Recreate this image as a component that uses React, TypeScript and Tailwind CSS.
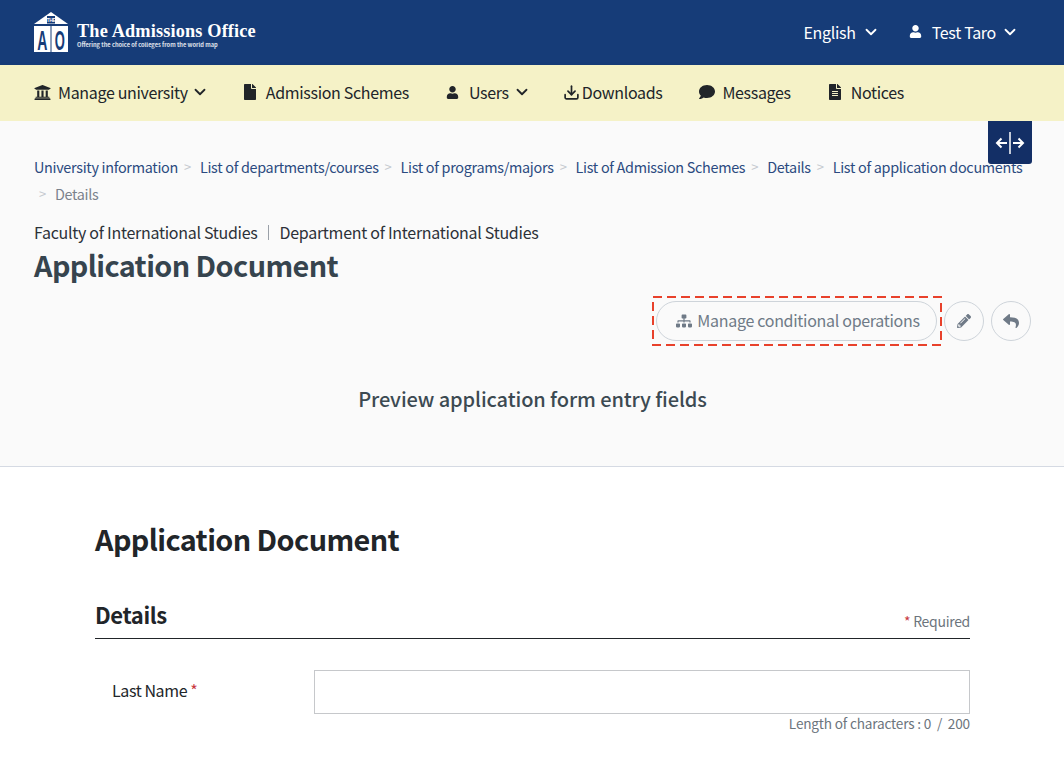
import { ChevronDown, Download } from "lucide-react";
import { FaComment, FaFile, FaFileAlt, FaPencilAlt, FaReply, FaSitemap, FaUniversity, FaUser } from "react-icons/fa";

const crumbs = [
  "University information",
  "List of departments/courses",
  "List of programs/majors",
  "List of Admission Schemes",
  "Details",
  "List of application documents",
];

function Logo() {
  return (
    <div className="flex items-start gap-[9px] mt-[-2px]">
      <svg width="34" height="46" viewBox="0 0 34 46" className="shrink-0 mb-[-6px]">
        <path d="M17 0 L34 12 H0 Z" fill="#fff" />
        <rect x="13" y="4" width="8" height="7.5" fill="#163c78" />
        <text x="17" y="10" textAnchor="middle" fontSize="5" fontWeight="700" fill="#fff" fontFamily="Liberation Sans, sans-serif">THE</text>
        <rect x="0" y="14" width="16.5" height="26" fill="#fff" />
        <rect x="17.5" y="14" width="16.5" height="26" fill="#fff" />
        <text transform="translate(8.2 37.5) scale(0.52 1)" textAnchor="middle" fontSize="27" fontWeight="700" fill="#163c78" fontFamily="Liberation Sans, sans-serif">A</text>
        <text transform="translate(25.8 37.5) scale(0.48 1)" textAnchor="middle" fontSize="27" fontWeight="700" fill="#163c78" fontFamily="Liberation Sans, sans-serif">O</text>
      </svg>
      <div className="text-white mt-[9px]">
        <div className="font-['Liberation_Serif',serif] font-bold text-[18.3px] leading-[20px] tracking-[0.15px]">The Admissions Office</div>
        <div className="text-[5.7px] leading-[8px] tracking-normal font-bold text-white/85">Offering the choice of colleges from the world map</div>
      </div>
    </div>
  );
}

function NavItem({ icon, label, caret, className }: { icon: React.ReactNode; label: string; caret?: React.ReactNode; className: string }) {
  return (
    <div className={`flex items-center ${className}`}>
      {icon}
      <span>{label}</span>
      {caret}
    </div>
  );
}

export default function App() {
  return (
    <div className="min-h-[757px] bg-white text-[16px] tracking-[-0.3px] text-[#212529] font-['Noto_Sans_CJK_JP','Noto_Sans',sans-serif] overflow-hidden">
      {/* Header */}
      <header className="h-[65px] bg-[#163c78] flex items-center justify-between pl-[34px] pr-[45px]">
        <Logo />
        <div className="flex items-center text-white pb-[2px]">
          <span>English</span>
          <ChevronDown size={18} strokeWidth={2.4} className="ml-[6px]" />
          <FaUser className="text-[13px] ml-[29px]" />
          <span className="ml-[10px]">Test Taro</span>
          <ChevronDown size={18} strokeWidth={2.4} className="ml-[5px]" />
        </div>
      </header>

      {/* Nav */}
      <nav className="relative h-[56px] bg-[#f5f2c7] shadow-[0_2px_6px_rgba(0,0,0,0.08)] flex items-center pl-[34px] pb-[2px] tracking-[-0.33px] text-[#212529]">
        <NavItem className="gap-[7px] mr-[33px]" icon={<FaUniversity className="text-[17px]" />} label="Manage university" caret={<ChevronDown size={18} strokeWidth={2.4} className="ml-[-4px]" />} />
        <NavItem className="gap-[8px] mr-[37px]" icon={<FaFile className="text-[16px]" />} label="Admission Schemes" />
        <NavItem className="gap-[10px] mr-[32px]" icon={<FaUser className="text-[13px]" />} label="Users" caret={<ChevronDown size={18} strokeWidth={2.4} className="ml-[-6px]" />} />
        <NavItem className="gap-[2px] mr-[37px]" icon={<Download size={17} strokeWidth={2.4} />} label="Downloads" />
        <NavItem className="gap-[7px] mr-[36px]" icon={<FaComment className="text-[16px]" />} label="Messages" />
        <NavItem className="gap-[8px]" icon={<FaFileAlt className="text-[16px]" />} label="Notices" />
      </nav>

      {/* Page head */}
      <section className="relative h-[346px] bg-[#fafafa] border-b border-[#d5dae3] pl-[34px] pr-[33px] pt-[32px]">
        <button className="absolute top-0 right-[32px] w-[44px] h-[43px] bg-[#132f66] rounded-b-[3px] flex items-center justify-center">
          <svg width="30" height="22" viewBox="0 0 30 22" fill="none" stroke="#fff" strokeWidth="2">
            <path d="M15 0 V22" strokeWidth="1.5" />
            <path d="M12 11 H2 M6.5 6.5 L2 11 L6.5 15.5" />
            <path d="M18 11 H28 M23.5 6.5 L28 11 L23.5 15.5" />
          </svg>
        </button>

        <div className="flex flex-wrap items-center text-[14.4px] tracking-[-0.3px] leading-[27px] text-[#2b4a80]">
          {crumbs.map((c, i) => (
            <span key={c} className="flex items-center">
              {i > 0 && <span className="text-[#c5c9cf] text-[13px] ml-[6px] mr-[9px]">&gt;</span>}
              {c}
            </span>
          ))}
          <span className="flex items-center text-[#7a828c] pl-[5px]">
            <span className="text-[#c5c9cf] text-[13px] mr-[9px]">&gt;</span>
            Details
          </span>
        </div>

        <div className="flex items-center mt-[13px] leading-[24px] tracking-[-0.28px] text-[#2c3138]">
          <span>Faculty of International Studies</span>
          <span className="ml-[10px] mr-[11px] w-px h-[15px] bg-[#9aa0a8]" />
          <span>Department of International Studies</span>
        </div>
        <h1 className="text-[28.8px] tracking-[-0.58px] leading-[40px] font-bold text-[#36444e] mt-[1px]">Application Document</h1>

        <div className="flex justify-end items-center gap-[7px] mt-[16px]">
          <div className="relative">
            <button className="h-[40px] w-[281px] pl-[3px] pb-[2px] rounded-full border border-[#ced4da] flex items-center justify-center gap-[5px] text-[#6f7a87]">
              <FaSitemap className="text-[16px] mt-[2px]" />
              <span>Manage conditional operations</span>
            </button>
            <svg width="290" height="50" className="absolute -left-[4px] -top-[5px] pointer-events-none" fill="none">
              <rect x="1" y="1" width="288" height="48" stroke="#e8412b" strokeWidth="2" strokeDasharray="9 5" />
            </svg>
          </div>
          <button className="w-[40px] h-[40px] rounded-full border border-[#ced4da] flex items-center justify-center text-[#6f7a87]">
            <FaPencilAlt className="text-[14px]" />
          </button>
          <button className="w-[40px] h-[40px] rounded-full border border-[#ced4da] flex items-center justify-center text-[#6f7a87]">
            <FaReply className="text-[16px]" />
          </button>
        </div>

        <p className="text-center text-[20px] tracking-[-0.1px] leading-[28px] font-medium text-[#3c4a52] mt-[44px]">Preview application form entry fields</p>
      </section>

      {/* Form */}
      <section className="pl-[95px] pr-[94px] pt-[52px]">
        <h2 className="text-[28.8px] tracking-[-0.58px] leading-[40px] font-bold text-[#212529]">Application Document</h2>
        <div className="flex items-end justify-between border-b border-[#212529] mt-[40px] pb-[9px]">
          <h3 className="text-[22px] tracking-[-0.4px] leading-[30px] font-bold">Details</h3>
          <span className="text-[14px] leading-[20px] text-[#6c757d] mb-[-2px]"><span className="text-[#c8393f]">*</span> Required</span>
        </div>
        <div className="flex mt-[31px]">
          <label className="w-[219px] pl-[17px] pt-[8px] leading-[24px] tracking-[-0.4px]">Last Name <span className="text-[#c8393f]">*</span></label>
          <div className="flex-1">
            <div className="h-[44px] border border-[#c6c8cb] bg-white" />
            <div className="text-right text-[13.6px] leading-[20px] tracking-[-0.17px] text-[#6c757d] mt-[-1px]">Length of characters : 0 &nbsp;/&nbsp; 200</div>
          </div>
        </div>
      </section>
    </div>
  );
}
